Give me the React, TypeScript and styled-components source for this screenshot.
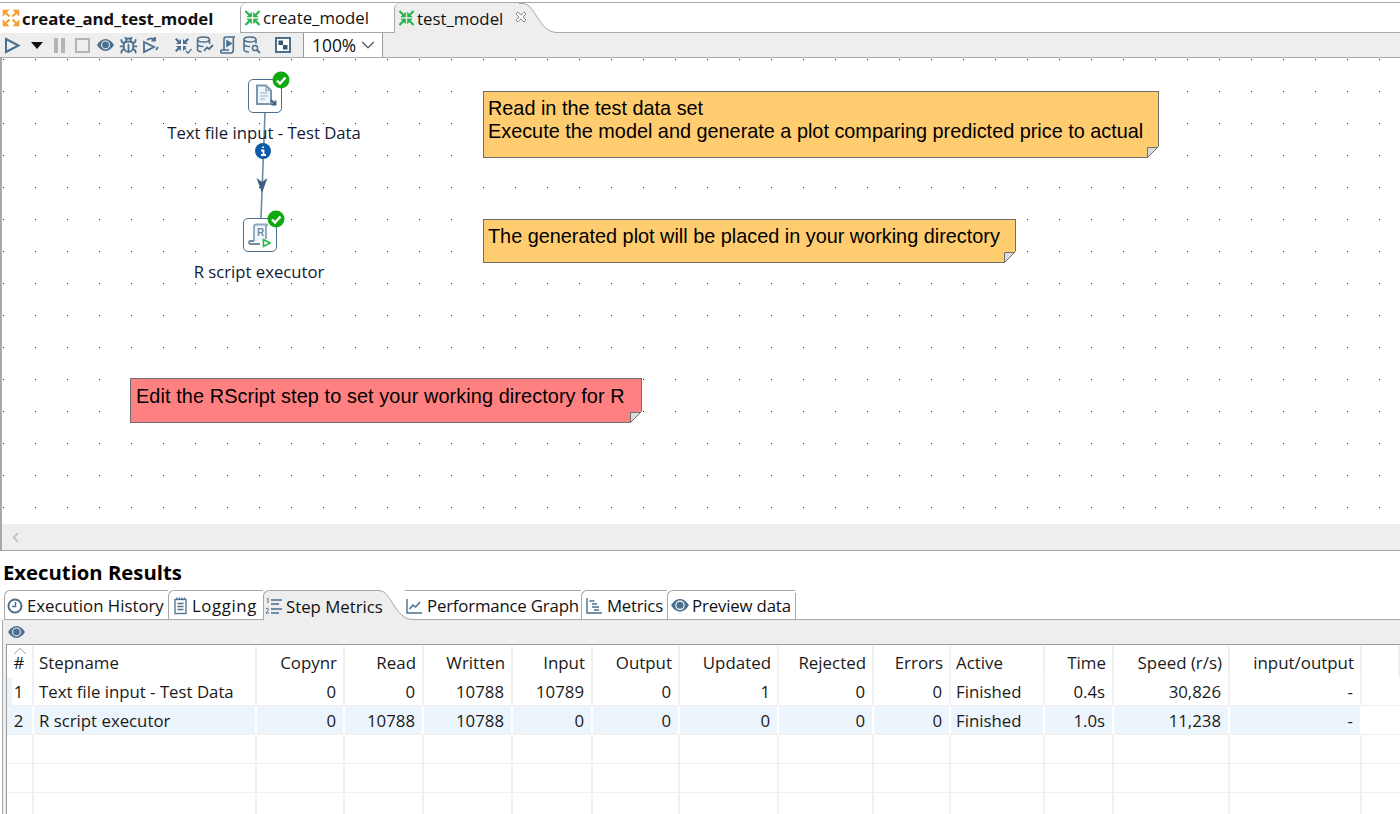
import React from "react";
import styled, { createGlobalStyle } from "styled-components";
import { Bug, ChevronDown, ChevronLeft, ChevronUp } from "lucide-react";

const steel = "#4a6f8f";
const uiFont = `"Open Sans", "Noto Sans", sans-serif`;

const Global = createGlobalStyle`
  html, body { margin: 0; padding: 0; background: #fff; }
  body { font-family: ${uiFont}; color: #111; }
`;

const Page = styled.div`
  width: 1400px;
  height: 814px;
  overflow: hidden;
  display: flex;
  flex-direction: column;
  background: #fff;
`;

const TabStrip = styled.div`
  height: 30px;
  margin-top: 2px;
  border-top: 1px solid #a8a8a8;
  display: flex;
  align-items: stretch;
  flex: none;
`;

const JobTab = styled.div<{ $w: number; $bold?: boolean; $active?: boolean }>`
  position: relative;
  z-index: ${(p) => (p.$active ? 2 : 0)};
  width: ${(p) => p.$w}px;
  flex: none;
  display: flex;
  align-items: center;
  gap: 2px;
  padding-left: ${(p) => (p.$bold ? 2 : 3)}px;
  box-sizing: border-box;
  white-space: nowrap;
  font-size: 16.8px;
  font-weight: ${(p) => (p.$bold ? 700 : 400)};
  background: ${(p) => (p.$active ? "#eeeeee" : "#fff")};
  border-left: ${(p) => (p.$bold ? "none" : "1px solid #a8a8a8")};
  border-bottom: ${(p) => (p.$active || p.$bold ? "none" : "1px solid #a8a8a8")};
  border-top-left-radius: ${(p) => (p.$bold ? 0 : 6)}px;
  svg { flex: none; }
`;

const CloseMark = styled.svg`
  margin-left: 10px;
  margin-top: -2px;
`;

const StripRest = styled.div`
  flex: 1;
  border-bottom: 1px solid #a8a8a8;
`;

const Swoosh = styled.svg<{ $overlap?: number }>`
  position: relative;
  z-index: 1;
  flex: none;
  display: block;
  margin-right: ${(p) => -(p.$overlap ?? 0)}px;
`;

const Toolbar = styled.div`
  height: 24px;
  flex: none;
  background: #eeeeee;
  display: flex;
  align-items: center;
`;

const ToolIcon = styled.span<{ $w: number }>`
  width: ${(p) => p.$w}px;
  flex: none;
  display: flex;
  justify-content: center;
  align-items: center;
`;

const Zoom = styled.div`
  margin-left: 9px;
  width: 80px;
  height: 24px;
  box-sizing: border-box;
  background: #fff;
  border-left: 1px solid #9a9a9a;
  border-right: 1px solid #9a9a9a;
  display: flex;
  align-items: center;
  justify-content: space-between;
  padding: 0 3px 0 8px;
  font-size: 17.4px;
`;

const Canvas = styled.div`
  position: relative;
  height: 494px;
  flex: none;
  box-sizing: border-box;
  border-left: 2px solid #a8a8a8;
  border-top: 1px solid #a8a8a8;
  border-bottom: 1px solid #a8a8a8;
  background-color: #fff;
  background-image: radial-gradient(circle at 0.5px 0.5px, #222 0.7px, transparent 0.75px);
  background-size: 32px 32px;
  background-position: 1px 1px;
`;

const Hop = styled.svg`
  position: absolute;
  left: 238px;
  top: 55px;
`;

const StepBox = styled.div<{ $x: number; $y: number }>`
  position: absolute;
  left: ${(p) => p.$x}px;
  top: ${(p) => p.$y}px;
  width: 34px;
  height: 34px;
  box-sizing: border-box;
  border: 1.5px solid ${steel};
  border-radius: 5px;
  background: #fff;
  display: flex;
  align-items: center;
  justify-content: center;
`;

const Badge = styled.svg`
  position: absolute;
  right: -9px;
  top: -9px;
`;

const StepLabel = styled.div<{ $cx: number; $y: number }>`
  position: absolute;
  left: ${(p) => p.$cx}px;
  top: ${(p) => p.$y}px;
  transform: translateX(-50%);
  white-space: nowrap;
  font-size: 16.7px;
  line-height: 22px;
  color: #111a33;
`;

const Note = styled.div<{ $x: number; $y: number; $w: number; $h: number; $red?: boolean }>`
  position: absolute;
  left: ${(p) => p.$x}px;
  top: ${(p) => p.$y}px;
  width: ${(p) => p.$w}px;
  height: ${(p) => p.$h}px;
  box-sizing: border-box;
  padding: ${(p) => (p.$red ? "6px 0 0 5px" : "5px 0 0 4px")};
  border: 1px solid #6f6f6f;
  background: ${(p) => (p.$red ? "#ff8080" : "#ffcc70")};
  font-family: "Liberation Sans", Arial, sans-serif;
  font-size: 19.85px;
  letter-spacing: ${(p) => (p.$red ? "0.1px" : "0")};
  line-height: 23px;
  color: #000;
  white-space: pre;
`;

const Fold = styled.svg`
  position: absolute;
  right: -1px;
  bottom: -1px;
`;

const ScrollBar = styled.div`
  position: absolute;
  left: 0;
  right: 0;
  bottom: 0;
  height: 26px;
  background: #eeeeee;
  display: flex;
  align-items: center;
  padding-left: 6px;
  color: #c4c4c4;
`;

const Title = styled.div`
  flex: none;
  height: 39px;
  padding: 8px 0 0 3px;
  box-sizing: border-box;
  font-size: 20.3px;
  line-height: 27px;
  font-weight: 700;
  color: #000;
`;

const ResultTabs = styled.div`
  height: 30px;
  flex: none;
  display: flex;
  align-items: stretch;
  padding-left: 4px;
`;

const ResultTab = styled.div<{
  $w: number;
  $pad: number;
  $track?: number;
  $active?: boolean;
  $noLeft?: boolean;
}>`
  position: relative;
  z-index: ${(p) => (p.$active ? 2 : 0)};
  width: ${(p) => p.$w}px;
  flex: none;
  box-sizing: border-box;
  display: flex;
  align-items: center;
  gap: 3px;
  padding: 1px 0 0 ${(p) => p.$pad}px;
  white-space: nowrap;
  font-size: 16.8px;
  letter-spacing: ${(p) => p.$track ?? 0}px;
  border-top: 1px solid #a8a8a8;
  border-left: ${(p) => (p.$noLeft ? "none" : "1px solid #a8a8a8")};
  border-bottom: ${(p) => (p.$active ? "none" : "1px solid #a8a8a8")};
  border-top-left-radius: ${(p) => (p.$noLeft ? 0 : 6)}px;
  background: ${(p) => (p.$active ? "#eeeeee" : "#fff")};
  svg { flex: none; }
`;

const ResultTabEnd = styled.div`
  width: 1px;
  flex: none;
  background: #a8a8a8;
  margin-top: 3px;
`;

const TabsRest = styled.div`
  flex: 1;
  border-bottom: 1px solid #a8a8a8;
`;

const Panel = styled.div`
  flex: 1;
  min-height: 0;
  background: #eeeeee;
  border-left: 1px solid #a8a8a8;
  margin-left: 2px;
  display: flex;
  flex-direction: column;
`;

const PanelBar = styled.div`
  height: 24px;
  flex: none;
  display: flex;
  align-items: center;
  padding-left: 5px;
`;

const Grid = styled.div`
  flex: 1;
  margin-left: 3px;
  background: #fff;
  border-top: 1px solid #9a9a9a;
  border-left: 1px solid #9a9a9a;
  display: grid;
  grid-template-columns: 27px 223px 88px 79px 89px 80px 87px 99px 95px 77px 94px 69px 116px 132px 1fr;
  grid-template-rows: 32px;
  grid-auto-rows: 29px;
  align-content: start;
  overflow: hidden;
`;

const HeadCell = styled.div<{ $right?: boolean; $center?: boolean }>`
  position: relative;
  display: flex;
  align-items: center;
  justify-content: ${(p) => (p.$center ? "center" : p.$right ? "flex-end" : "flex-start")};
  padding: 1px 8px 0 5px;
  box-sizing: border-box;
  font-size: 16.9px;
  color: #1a1a1a;
  box-shadow: inset -2px 0 0 #f0f0f0;
  margin-top: 1px;
`;

const SortMark = styled.span`
  position: absolute;
  left: 2px;
  top: -6px;
  color: #777;
  display: flex;
`;

const BodyCell = styled.div<{ $right?: boolean; $center?: boolean; $alt?: boolean; $lead?: boolean }>`
  display: flex;
  align-items: center;
  justify-content: ${(p) => (p.$center ? "center" : p.$right ? "flex-end" : "flex-start")};
  padding: 1px 7px 0 5px;
  box-sizing: border-box;
  font-size: 16.8px;
  color: #1a1a1a;
  background: ${(p) => (p.$alt ? "#edf5fc" : "#fff")};
  border-right: 2px solid ${(p) => (p.$alt ? "#fff" : "#edf2fa")};
  border-bottom: 1px solid #f0f0f0;
  box-shadow: ${(p) => (p.$lead ? "inset 5px 0 0 #edf5fc" : "none")};
`;

const RestCell = styled.div`
  border-bottom: 1px solid #f0f0f0;
`;

function Arrows({ color, out }: { color: string; out?: boolean }) {
  // one corner arrow, mirrored into the other three corners
  const head = out ? "M1 1h6L1 7z" : "M8 8H3l5-5z";
  const shaft = out ? "M3.500 3.500L7.500 7.500" : "M1.500 1.500L5.500 5.500";
  const corners = ["", "matrix(-1 0 0 1 18 0)", "matrix(1 0 0 -1 0 18)", "matrix(-1 0 0 -1 18 18)"];
  return (
    <svg width={out ? 18 : 17} height="18" viewBox="0 0 18 18" fill={color} stroke={color} strokeWidth="0.6">
      {corners.map((t) => (
        <g key={t} transform={t || undefined}>
          <path d={head} />
          <path d={shaft} fill="none" strokeWidth="2.200" />
        </g>
      ))}
    </svg>
  );
}

function Play() {
  return (
    <svg width="17" height="17" viewBox="0 0 17 17" fill="none" stroke={steel} strokeWidth="2">
      <path d="M2 2l12.500 6.500L2 15z" />
    </svg>
  );
}

function Caret() {
  return (
    <svg width="12" height="7" viewBox="0 0 12 7">
      <path d="M0 0h12L6 7z" fill="#111" />
    </svg>
  );
}

function Pause() {
  return (
    <svg width="11" height="15" viewBox="0 0 11 15" fill="#b4b4b4">
      <rect x="0" width="4" height="15" />
      <rect x="7" width="4" height="15" />
    </svg>
  );
}

function Stop() {
  return (
    <svg width="15" height="15" viewBox="0 0 15 15" fill="none" stroke="#b4b4b4" strokeWidth="2">
      <rect x="1" y="1" width="13" height="13" />
    </svg>
  );
}

function Eye({ size = 17 }: { size?: number }) {
  return (
    <svg width={size} height={size * 0.7} viewBox="0 0 17 12" fill={steel}>
      <path fillRule="evenodd" d="M0 6c2-3.600 5-6 8.500-6S15 2.400 17 6c-2 3.600-5 6-8.500 6S2 9.600 0 6zm8.500-4.500a4.500 4.500 0 1 0 0 9 4.500 4.500 0 0 0 0-9z" />
      <circle cx="8.500" cy="6" r="3.400" />
    </svg>
  );
}

function DebugForward() {
  return (
    <svg width="17" height="18" viewBox="0 0 17 18" fill="none" stroke={steel} strokeWidth="1.800">
      <path d="M2 6v10l10-5z" />
      <path d="M5 4c3-2 6-2 8 0M13 1v3.500h-3.500" />
      <path d="M14 14l2-3" />
    </svg>
  );
}

function Verify() {
  return (
    <svg width="18" height="17" viewBox="0 0 18 17" fill={steel}>
      <path d="M7 7H2l1.700-1.700L1 2.600 2.600 1l2.700 2.700L7 2z" />
      <path d="M9 7h5l-1.700-1.700L15 2.600 13.400 1l-2.700 2.700L9 2z" />
      <path d="M7 9H2l1.700 1.700L1 13.400 2.600 15l2.700-2.700L7 14z" />
      <path d="M9 9v5l1.700-1.700.8.800 1-1-1-1L12 9z" />
      <path d="M12 14l2 2 3.500-4" fill="none" stroke={steel} strokeWidth="1.200" />
    </svg>
  );
}

function DbChart() {
  return (
    <svg width="18" height="18" viewBox="0 0 18 18" fill="none" stroke={steel} strokeWidth="1.500">
      <ellipse cx="7.500" cy="3.500" rx="6" ry="2.500" />
      <path d="M1.500 3.500v10c0 1.200 1.500 2 4 2.300M13.500 3.500V8M1.500 8c0 1.400 2.700 2.500 6 2.500" />
      <path d="M8 15l3-3.500 2 1.500 4-4" strokeWidth="1.800" />
    </svg>
  );
}

function ScriptPlay() {
  return (
    <svg width="17" height="18" viewBox="0 0 17 18" fill="none" stroke={steel} strokeWidth="1.600">
      <path d="M4 14V3c0-1.200.8-2 2-2h9c-1 0-1.700.8-1.700 2v11c0 1.800-1 3-2.500 3H2c-.9 0-1.300-.8-1.300-1.500S1.200 14 2 14h7" />
      <path d="M7 5l4 2.500L7 10z" fill={steel} />
    </svg>
  );
}

function DbSearch() {
  return (
    <svg width="18" height="18" viewBox="0 0 18 18" fill="none" stroke={steel} strokeWidth="1.500">
      <ellipse cx="7" cy="3.500" rx="6" ry="2.500" />
      <path d="M1 3.500v10c0 1.300 2 2.300 5 2.500M13 3.500v4M1 8c0 1.400 2.700 2.500 6 2.500" />
      <circle cx="12" cy="12" r="2.600" />
      <path d="M14 14l3 3" strokeWidth="1.800" />
    </svg>
  );
}

function MapBox() {
  return (
    <svg width="16" height="16" viewBox="0 0 16 16">
      <rect x="1" y="1" width="14" height="14" fill="#fff" stroke={steel} strokeWidth="2" />
      <rect x="3.500" y="3.500" width="4.500" height="4.500" fill="#39546c" />
      <rect x="8" y="8" width="4.500" height="4.500" fill="#39546c" />
    </svg>
  );
}

function CheckBadge() {
  return (
    <Badge width="18" height="18" viewBox="0 0 18 18">
      <circle cx="9" cy="9" r="8.500" fill="#10a910" />
      <path d="M5 9.500l3 3 5.500-6" fill="none" stroke="#fff" strokeWidth="2.400" />
    </Badge>
  );
}

function FoldCorner({ fill }: { fill: string }) {
  return (
    <Fold width="12" height="12" viewBox="0 0 12 12">
      <path d="M12 0L0 12h12z" fill="#fff" />
      <path d="M12 0L0 12V0z" fill={fill} />
      <path d="M11.500 0L0 11.500" stroke="#8a8a8a" />
      <path d="M.5 11.500V1.500h10z" fill="#dcdcdc" stroke="#6f6f6f" />
    </Fold>
  );
}

function TextFileIcon() {
  return (
    <svg width="26" height="26" viewBox="0 0 26 26" fill="none">
      <path d="M5 2.500h9l5 5v13.500H5z" stroke="#7a96ad" strokeWidth="2" fill="#eef5fb" />
      <path d="M14 2.500v5h5" stroke="#9ab0c2" strokeWidth="1.500" />
      <path d="M8 10h7M8 13h8M8 16h5" stroke="#9ab0c2" strokeWidth="1.200" />
      <path d="M19 17l4.500 4.500M23.500 17.500v4h-4" stroke="#3f6080" strokeWidth="1.800" />
    </svg>
  );
}

function RScriptIcon() {
  return (
    <svg width="28" height="28" viewBox="0 0 28 28" fill="none">
      <path d="M8 20V6c0-1.500 1-2.500 2.500-2.500H22c-1 0-2 1-2 2.500v12" stroke="#8da6ba" strokeWidth="1.800" fill="#eef5fb" />
      <path d="M8 20H4.500c-2 0-2 3 0 3H14" stroke="#6f8ca3" strokeWidth="1.800" />
      <text x="11" y="15" fontFamily="Liberation Sans, sans-serif" fontWeight="700" fontSize="10" fill="#6f8ca3">R</text>
      <path d="M17.500 18.500l6.500 3.500-6.500 3.500z" stroke="#1fb84a" strokeWidth="1.600" fill="#fff" />
    </svg>
  );
}

function HistoryIcon() {
  return (
    <svg width="17" height="16" viewBox="0 0 17 16" fill="none" stroke={steel} strokeWidth="2">
      <circle cx="8" cy="8" r="6.500" />
      <path d="M8.500 4v4.500H5" strokeWidth="1.500" />
    </svg>
  );
}

function LogIcon() {
  return (
    <svg width="15" height="18" viewBox="0 0 15 18" fill="none" stroke={steel} strokeWidth="1.300">
      <rect x="1" y="2.500" width="11" height="14" />
      <path d="M3.500 6.500h6M3.500 9.500h6M3.500 12.500h6" />
      <path d="M3 0.500v2M5.500 0.500v2M8 0.500v2M10.500 0.500v2" />
    </svg>
  );
}

function StepsIcon() {
  return (
    <svg width="18" height="18" viewBox="0 0 18 18" fill="none" stroke={steel} strokeWidth="1.400">
      <path d="M6 3h11M6 7h8M6 12h11M6 16h8" />
      <path d="M2 2l1-.6V6" strokeWidth="1" />
      <path d="M1 12c.5-1.200 3-1 2.500.5L1 16h3" strokeWidth="1" />
    </svg>
  );
}

function GraphIcon() {
  return (
    <svg width="18" height="16" viewBox="0 0 18 16" fill="none" stroke={steel} strokeWidth="1.400">
      <path d="M1 1v14h15" />
      <path d="M3.500 11l3.500-4 2.500 2L14 4" strokeWidth="1.600" />
    </svg>
  );
}

function MetricsIcon() {
  return (
    <svg width="18" height="16" viewBox="0 0 18 16" fill="none" stroke={steel} strokeWidth="1.400">
      <path d="M1 0v15h15" />
      <path d="M3.500 3h5M6 6h5M6 9h7M8 12h5" strokeWidth="1.700" />
    </svg>
  );
}

function TabCurve({ overlap }: { overlap?: number }) {
  return (
    <Swoosh $overlap={overlap} width="42" height="30" viewBox="0 0 42 30">
      <path d="M0 0h4c12 0 16 29 34 29h4v1H0z" fill="#eeeeee" />
      <path d="M0 .5h4c12 0 16 29 34 29h4" fill="none" stroke="#a8a8a8" />
    </Swoosh>
  );
}

const columns = [
  { key: "#", center: true },
  { key: "Stepname" },
  { key: "Copynr", right: true },
  { key: "Read", right: true },
  { key: "Written", right: true },
  { key: "Input", right: true },
  { key: "Output", right: true },
  { key: "Updated", right: true },
  { key: "Rejected", right: true },
  { key: "Errors", right: true },
  { key: "Active" },
  { key: "Time", right: true },
  { key: "Speed (r/s)", right: true },
  { key: "input/output", right: true },
];

const rows = [
  ["1", "Text file input - Test Data", "0", "0", "10788", "10789", "0", "1", "0", "0", "Finished", "0.4s", "30,826", "-"],
  ["2", "R script executor", "0", "10788", "10788", "0", "0", "0", "0", "0", "Finished", "1.0s", "11,238", "-"],
  Array(14).fill(""),
  Array(14).fill(""),
  Array(14).fill(""),
];

export default function App() {
  return (
    <Page>
      <Global />
      <TabStrip>
        <JobTab $w={240} $bold>
          <Arrows color="#f5a030" out />
          create_and_test_model
        </JobTab>
        <JobTab $w={154}>
          <Arrows color="#27b24a" />
          create_model
        </JobTab>
        <JobTab $w={125} $active>
          <Arrows color="#27b24a" />
          test_model
          <CloseMark width="12" height="12" viewBox="0 0 12 12" fill="#fff" stroke="#8a8a8a">
            <path d="M1 3l2-2 3 3 3-3 2 2-3 3 3 3-2 2-3-3-3 3-2-2 3-3z" />
          </CloseMark>
        </JobTab>
        <TabCurve />
        <StripRest />
      </TabStrip>
      <Toolbar>
        <ToolIcon $w={25}><Play /></ToolIcon>
        <ToolIcon $w={23}><Caret /></ToolIcon>
        <ToolIcon $w={23}><Pause /></ToolIcon>
        <ToolIcon $w={23}><Stop /></ToolIcon>
        <ToolIcon $w={23}><Eye /></ToolIcon>
        <ToolIcon $w={22}><Bug size={19} color={steel} strokeWidth={2.2} /></ToolIcon>
        <ToolIcon $w={22}><DebugForward /></ToolIcon>
        <ToolIcon $w={11} />
        <ToolIcon $w={22}><Verify /></ToolIcon>
        <ToolIcon $w={22}><DbChart /></ToolIcon>
        <ToolIcon $w={24}><ScriptPlay /></ToolIcon>
        <ToolIcon $w={23}><DbSearch /></ToolIcon>
        <ToolIcon $w={9} />
        <ToolIcon $w={22}><MapBox /></ToolIcon>
        <Zoom>
          100%
          <ChevronDown size={22} color="#555" strokeWidth={1.3} />
        </Zoom>
      </Toolbar>
      <Canvas>
        <Hop width="40" height="110" viewBox="0 0 40 110" fill="none">
          <path d="M25 0L21 105" stroke="#6f8ca3" strokeWidth="1.600" />
          <path d="M16.500 65l5.500 15 5.500-15-5.500 4z" fill="#3f6080" />
          <circle cx="23" cy="38" r="8" fill="#0d5ca5" />
          <path d="M23 33.500v1.500M21 37.500h2.500v4.500M21 42h5" stroke="#fff" strokeWidth="1.800" />
        </Hop>
        <StepBox $x={246} $y={21}>
          <TextFileIcon />
          <CheckBadge />
        </StepBox>
        <StepBox $x={241} $y={160}>
          <RScriptIcon />
          <CheckBadge />
        </StepBox>
        <StepLabel $cx={262} $y={64}>Text file input - Test Data</StepLabel>
        <StepLabel $cx={257} $y={203}>R script executor</StepLabel>
        <Note $x={481} $y={33} $w={676} $h={67}>
          {"Read in the test data set\nExecute the model and generate a plot comparing predicted price to actual"}
          <FoldCorner fill="#ffcc70" />
        </Note>
        <Note $x={481} $y={161} $w={533} $h={44}>
          The generated plot will be placed in your working directory
          <FoldCorner fill="#ffcc70" />
        </Note>
        <Note $x={128} $y={320} $w={512} $h={45} $red>
          Edit the RScript step to set your working directory for R
          <FoldCorner fill="#ff8080" />
        </Note>
        <ScrollBar>
          <ChevronLeft size={15} strokeWidth={3} />
        </ScrollBar>
      </Canvas>
      <Title>Execution Results</Title>
      <ResultTabs>
        <ResultTab $w={164} $pad={2}><HistoryIcon />Execution History</ResultTab>
        <ResultTab $w={95} $pad={5} $track={0.6}><LogIcon />Logging</ResultTab>
        <ResultTab $w={112} $pad={1} $active><StepsIcon />Step Metrics</ResultTab>
        <TabCurve overlap={12} />
        <ResultTab $w={176} $pad={1} $track={-0.18} $noLeft><GraphIcon />Performance Graph</ResultTab>
        <ResultTab $w={86} $pad={4} $track={-0.25}><MetricsIcon />Metrics</ResultTab>
        <ResultTab $w={128} $pad={3} $track={-0.15}><Eye size={18} />Preview data</ResultTab>
        <ResultTabEnd />
        <TabsRest />
      </ResultTabs>
      <Panel>
        <PanelBar><Eye size={17} /></PanelBar>
        <Grid>
          {columns.map((c) => (
            <HeadCell key={c.key} $right={c.right} $center={c.center}>
              {c.key === "#" && <SortMark><ChevronUp size={22} strokeWidth={0.8} /></SortMark>}
              {c.key}
            </HeadCell>
          ))}
          <HeadCell />
          {rows.map((r, i) => (
            <React.Fragment key={i}>
              {r.map((v, j) => (
                <BodyCell
                  key={j}
                  $right={columns[j].right}
                  $center={columns[j].center}
                  $alt={i === 1}
                  $lead={i === 0 && j === 0}
                >
                  {v}
                </BodyCell>
              ))}
              <RestCell />
            </React.Fragment>
          ))}
        </Grid>
      </Panel>
    </Page>
  );
}
